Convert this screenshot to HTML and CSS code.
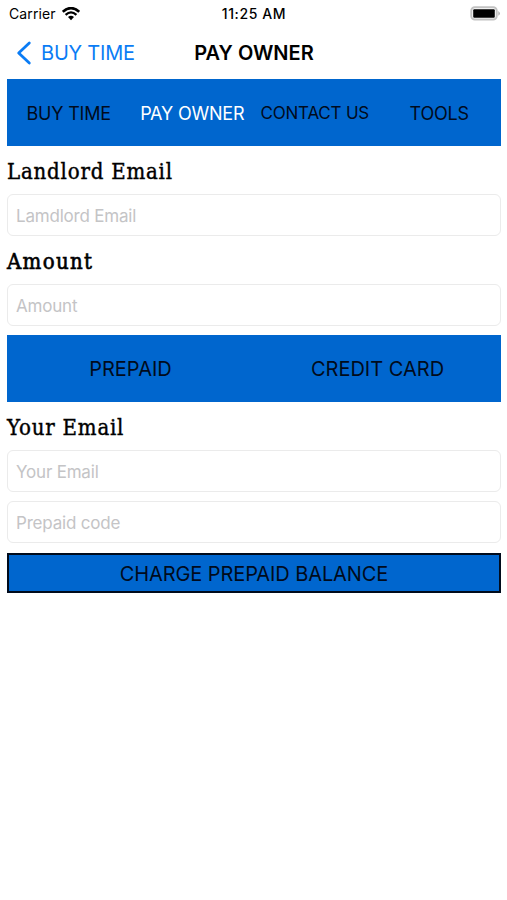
FILE: index.html
```html
<!DOCTYPE html>
<html lang="en">
<head>
  <meta charset="UTF-8" />
  <meta name="viewport" content="width=device-width, initial-scale=1" />
  <title>Pay Owner</title>
  <link rel="stylesheet" href="styles.css">
</head>
<body>

  <div class="status-bar">
    <div class="carrier">
      <span class="carrier-name">Carrier</span>
      <svg class="wifi" width="18" height="14" viewBox="0 0 18 14">
        <path d="M.8 4.8Q9-2.6 17.2 4.8" fill="none" stroke="#000" stroke-width="2.6" />
        <path d="M3.6 7.8Q9 3 14.4 7.8" fill="none" stroke="#000" stroke-width="2.3" />
        <path d="M6 10.1Q9 7.6 12 10.1L9 13.2Z" />
      </svg>
    </div>
    <span class="clock">11:25 AM</span>
    <svg class="battery" width="31" height="15" viewBox="0 0 31 15">
      <rect x="1.3" y="1.2" width="25.4" height="12.4" rx="3.5" fill="#fff" stroke="#c2c2c2" stroke-width="2" />
      <rect x="3.2" y="3.2" width="21.6" height="8.6" rx="1" />
      <path d="M28.3 5Q31.5 7.4 28.3 9.8Z" fill="#b0b0b0" />
    </svg>
  </div>

  <div class="nav-bar">
    <a class="back" href="#">
      <svg width="16" height="24" viewBox="0 0 16 24">
        <path d="M13.3 2L2.7 12L13.3 22" fill="none" stroke="#0a7cf5" stroke-width="2.8" stroke-linecap="round" stroke-linejoin="round" />
      </svg>
      <span class="back-text">BUY TIME</span>
    </a>
    <span class="nav-title">PAY OWNER</span>
  </div>

  <div class="content">
    <div class="bar tabs">
      <a class="tab" href="#">BUY TIME</a>
      <a class="tab active" href="#">PAY OWNER</a>
      <a class="tab tab-contact" href="#">CONTACT US</a>
      <a class="tab" href="#">TOOLS</a>
    </div>

    <label for="landlord">Landlord Email</label>
    <input type="text" id="landlord" placeholder="Lamdlord Email" />

    <label class="amount-label" for="amount">Amount</label>
    <input type="text" id="amount" placeholder="Amount" />

    <div class="bar methods">
      <a class="method" href="#">PREPAID</a>
      <a class="method" href="#">CREDIT CARD</a>
    </div>

    <label for="email">Your Email</label>
    <input type="text" id="email" placeholder="Your Email" />
    <input type="text" class="code" id="code" placeholder="Prepaid code" />

    <button class="btn">CHARGE PREPAID BALANCE</button>
  </div>

</body>
</html>
```

FILE: styles.css
```css
* {
  box-sizing: border-box;
}

body {
  margin: 0;
  background: #fff;
  color: #000;
  font-family: Inter, sans-serif;
}

a {
  color: inherit;
  text-decoration: none;
}

svg {
  display: block;
}

.status-bar {
  display: grid;
  grid-template-columns: 1fr auto 1fr;
  align-items: center;
  height: 27px;
  padding: 0 6px 0 9px;
  font-size: 14px;
}

.carrier {
  display: flex;
  align-items: center;
  gap: 6px;
}

.carrier-name {
  letter-spacing: 0.1px;
}

.clock {
  margin-right: 2px;
  font-weight: 500;
  font-size: 14px;
  letter-spacing: 0.6px;
}

.battery {
  justify-self: end;
}

.nav-bar {
  display: grid;
  grid-template-columns: 1fr auto 1fr;
  align-items: center;
  height: 52px;
  padding: 0 15px 0 16px;
}

.back {
  display: flex;
  align-items: center;
  gap: 9px;
  color: #0a7cf5;
  font-size: 20px;
}

.back-text {
  letter-spacing: -0.2px;
}

.nav-title {
  font-size: 20px;
  font-weight: 600;
}

.content {
  display: flex;
  flex-direction: column;
  padding: 0 6px 0 7px;
}

.bar {
  display: grid;
  height: 67px;
  padding-top: 1px;
  background: #0066ce;
  color: #000b1c;
}

.tabs {
  grid-template-columns: repeat(4, 1fr);
  font-size: 18px;
  letter-spacing: -0.2px;
}

.tab, .method {
  display: flex;
  align-items: center;
  justify-content: center;
  white-space: nowrap;
}

.tab.active {
  color: #fff;
}

.tab-contact {
  padding-right: 2px;
  font-size: 17px;
}

label {
  height: 48px;
  line-height: 51px;
  font-family: "DejaVu Serif Condensed", "DejaVu Serif", serif;
  font-stretch: condensed;
  font-size: 22px;
  letter-spacing: 0.8px;
  -webkit-text-stroke: 0.4px #000;
}

.amount-label {
  letter-spacing: 1.3px;
  -webkit-text-stroke-width: 0.6px;
}

input {
  width: 100%;
  height: 42px;
  padding: 1px 8px 0;
  border: 1px solid #ebebeb;
  border-radius: 6px;
  background: #fff;
  font-family: Inter, sans-serif;
  font-size: 17px;
  letter-spacing: -0.2px;
}

input::placeholder {
  color: #c4c4c6;
}

.methods {
  grid-template-columns: 1fr 1fr;
  margin-top: 9px;
  font-size: 20px;
}

.code {
  margin-top: 9px;
}

.btn {
  height: 40px;
  margin-top: 10px;
  padding: 1px 0 0;
  border: 2px solid #000b1c;
  background: #0066ce;
  color: #000b1c;
  font-family: Inter, sans-serif;
  font-size: 20px;
  letter-spacing: -0.1px;
}
```
